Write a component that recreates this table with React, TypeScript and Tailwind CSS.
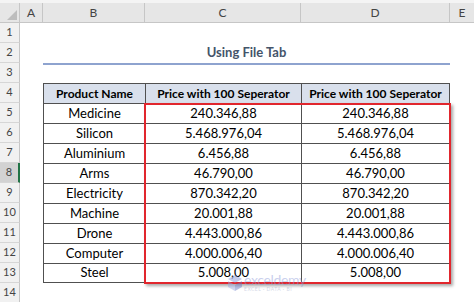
import React from "react";

const products = [
  { name: "Medicine", price: "240.346,88" },
  { name: "Silicon", price: "5.468.976,04" },
  { name: "Aluminium", price: "6.456,88" },
  { name: "Arms", price: "46.790,00" },
  { name: "Electricity", price: "870.342,20" },
  { name: "Machine", price: "20.001,88" },
  { name: "Drone", price: "4.443.000,86" },
  { name: "Computer", price: "4.000.006,40" },
  { name: "Steel", price: "5.008,00" },
];

const font = { fontFamily: "Lato, 'Open Sans', sans-serif" };

const RowHead = ({ n, active }: { n: number; active?: boolean }) => (
  <div
    className={
      "w-[20px] h-full shrink-0 flex items-center justify-center text-[11px] text-[#444] border-b border-[#d6d6d6] " +
      (active ? "bg-[#d2d2d2] border-r-2 border-r-[#217346]" : "bg-[#f1f1f1] border-r border-r-[#c6c6c6]")
    }
  >
    {n}
  </div>
);

const Row = ({ n, active, children }: { n: number; active?: boolean; children?: React.ReactNode }) => (
  <div className="flex h-[20px]">
    <RowHead n={n} active={active} />
    <div className="w-[23px] shrink-0" />
    {children}
  </div>
);

export default function App() {
  return (
    <div className="relative w-[474px] h-[302px] overflow-hidden bg-white" style={font}>
      <div className="h-[3px] bg-[#f4f4f4]" />
      <div className="flex h-[20px] bg-[#e6e6e6] border-b border-[#c6c6c6] text-[12px] text-[#444]">
        <div className="w-[20px] shrink-0 relative border-r border-[#c6c6c6]">
          <svg className="absolute right-[2px] bottom-[2px]" width="10" height="10" viewBox="0 0 10 10">
            <polygon points="10,0 10,10 0,10" fill="#bdbdbd" />
          </svg>
        </div>
        <div className="w-[23px] shrink-0 flex items-center justify-center border-r border-[#c6c6c6]">A</div>
        <div className="w-[102px] shrink-0 flex items-center justify-center border-r border-[#c6c6c6]">B</div>
        <div className="w-[156px] shrink-0 flex items-center justify-center border-r border-[#c6c6c6]">C</div>
        <div className="w-[149px] shrink-0 flex items-center justify-center border-r border-[#c6c6c6]">D</div>
        <div className="flex-1 flex items-center justify-center">E</div>
      </div>

      <Row n={1} />
      <Row n={2}>
        <div className="w-[407px] flex items-center justify-center text-[13px] font-bold text-[#44546a]">
          Using File Tab
        </div>
      </Row>
      <Row n={3}>
        <div className="w-[407px] border-t-2 border-[#8ea3cf]" />
      </Row>
      <Row n={4}>
        <div className="w-[102px] flex items-center justify-center bg-[#d9e0ec] border-l border-t border-[#505050] text-[12px] font-bold text-black">
          Product Name
        </div>
        <div className="w-[156px] flex items-center justify-center bg-[#d9e0ec] border-l border-t border-[#505050] text-[12px] font-bold text-black">
          Price with 100 Seperator
        </div>
        <div className="w-[149px] flex items-center justify-center bg-[#d9e0ec] border-l border-t border-r border-[#505050] text-[12px] font-bold text-black">
          Price with 100 Seperator
        </div>
      </Row>
      {products.map((p, i) => {
        const last = i === products.length - 1;
        const edge = last ? " border-b" : "";
        return (
          <Row key={p.name} n={i + 5} active={i + 5 === 8}>
            <div className={"w-[102px] flex items-center justify-center border-l border-t border-[#505050] text-[13px] text-black" + edge}>
              {p.name}
            </div>
            <div className={"w-[156px] flex items-center justify-center border-l border-t border-[#505050] text-[13px] text-black" + edge}>
              {p.price}
            </div>
            <div className={"w-[149px] flex items-center justify-center border-l border-t border-r border-[#505050] text-[13px] text-black" + edge}>
              {p.price}
            </div>
          </Row>
        );
      })}
      <Row n={14} />

      {/* red highlight box */}
      <div className="absolute left-[144px] top-[103px] w-[307px] h-[181px] border-2 border-[#e1262d] shadow-[2px_2px_3px_rgba(0,0,0,0.35)] pointer-events-none" />

      {/* watermark */}
      <div className="absolute left-[228px] top-[273px] flex items-center gap-[2px] opacity-45 pointer-events-none">
        <svg width="14" height="16" viewBox="0 0 14 16">
          <polygon points="7,0 14,4 7,8 0,4" fill="#7d8fd6" />
          <polygon points="0,6 7,10 7,16 0,12" fill="#9aa8e0" />
          <polygon points="14,6 7,10 7,16 14,12" fill="#6676c4" />
        </svg>
        <div className="flex flex-col leading-none">
          <span className="text-[14px] text-[#8a98d8] tracking-tight">exceldemy</span>
          <span className="text-[5px] text-[#a0a8c8] tracking-widest">EXCEL · DATA · BI</span>
        </div>
      </div>
    </div>
  );
}
